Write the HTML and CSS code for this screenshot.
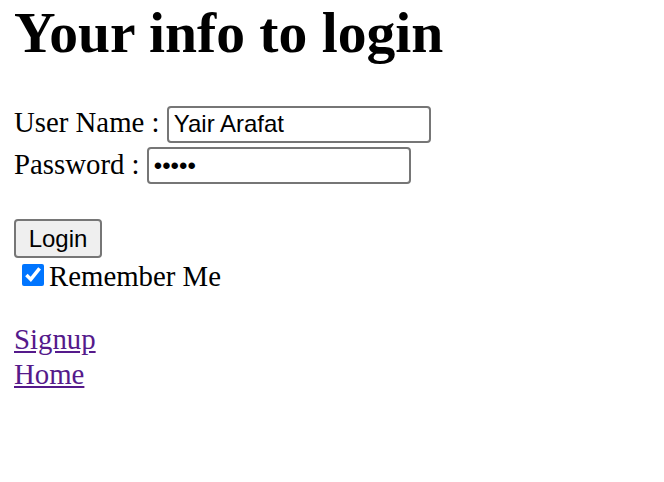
FILE: index.html
```html
<!DOCTYPE html>
<html>
<head>
<meta charset="utf-8">
<title>Login</title>
<link rel="stylesheet" href="styles.css">
</head>
<body>
<h1 class="title">Your info to login</h1>
<form class="login-form">
User Name : <input class="field field-first" type="text" value="Yair Arafat"><br>
Password : <input class="field" type="password" value="12345"><br><br>
<input class="btn" type="submit" value="Login"><br>
<input class="check" type="checkbox" checked>Remember Me
</form>
<a class="link" href="#">Signup</a><br>
<a class="link" href="#">Home</a>
</body>
</html>
```
FILE: styles.css
```css
html, body {
  background: #ffffff;
}
body {
  margin: 0 14px 14px 14px;
  font-family: "Liberation Serif", "Times New Roman", serif;
  font-size: 28.8px;
  line-height: 35px;
  color: #000000;
}
.title {
  font-size: 57.6px;
  line-height: 65px;
  font-weight: bold;
  margin: 0 0 40px 0;
}
.login-form {
  margin: 0 0 28px 0;
}
.field {
  font-family: "Liberation Sans", Arial, sans-serif;
  font-size: 24px;
  line-height: normal;
  width: 264px;
  height: 37px;
  box-sizing: border-box;
  padding: 0 5px;
  border: 2px solid #767676;
  border-radius: 4px;
  color: #000000;
  background: #ffffff;
  margin: 0;
}
.field-first {
  margin-bottom: 4px;
}
.btn {
  font-family: "Liberation Sans", Arial, sans-serif;
  font-size: 24px;
  line-height: normal;
  width: 88px;
  height: 39px;
  box-sizing: border-box;
  padding: 0;
  border: 2px solid #767676;
  border-radius: 4px;
  background: #efefef;
  color: #000000;
  margin: 0 0 1px 0;
}
.check {
  width: 22px;
  height: 22px;
  margin: 1px 5px 3px 8px;
  accent-color: #0075ff;
}
.link {
  color: #551a8b;
}
```
